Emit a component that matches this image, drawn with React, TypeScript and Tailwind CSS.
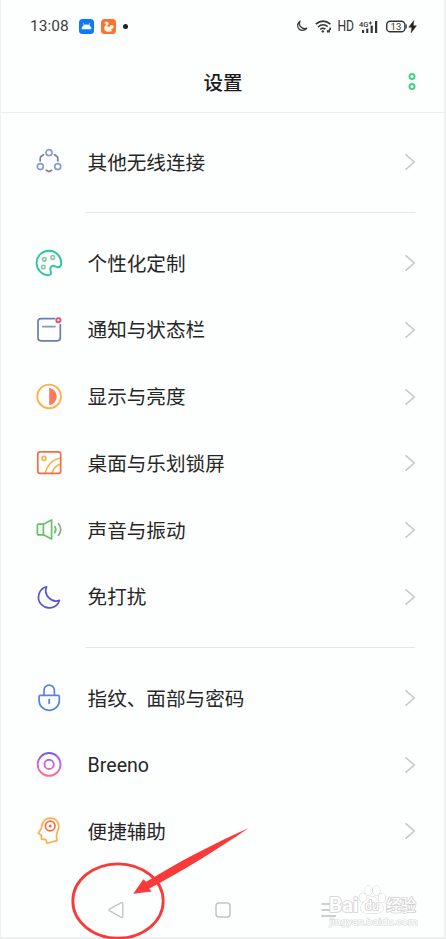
import React from 'react';

type Item = { label: string; icon: React.ReactNode };

function Icon({ color, children }: { color: string; children: React.ReactNode }) {
  return (
    <svg
      width="28"
      height="28"
      viewBox="0 0 28 28"
      fill="none"
      stroke={color}
      strokeWidth="1.7"
      strokeLinecap="round"
      strokeLinejoin="round"
      className="shrink-0"
    >
      {children}
    </svg>
  );
}

const groups: Item[][] = [
  [
    {
      label: '其他无线连接',
      icon: (
        <Icon color="#8c9cc8">
          <circle cx="14" cy="4.7" r="3" />
          <circle cx="5.3" cy="18.6" r="3" />
          <circle cx="22.7" cy="18.6" r="3" />
          <g stroke="#7b8188">
            <path d="M5.2 12.9V10.4Q5.2 8.8 6.6 8L8.5 6.8" />
            <path d="M22.8 12.9V10.4Q22.8 8.8 21.4 8L19.5 6.8" />
            <path d="M11.4 22.2L13.2 23.3Q14 23.8 14.8 23.3L16.6 22.2" />
          </g>
        </Icon>
      ),
    },
  ],
  [
    {
      label: '个性化定制',
      icon: (
        <Icon color="#2cc5a4">
          <path d="M26.2 14.6A12.3 12.3 0 1 0 13.2 26.3C17.6 26.4 15.6 22.6 15.3 20.4C15 17.6 17.6 15.9 20 17.3C23 19 26.2 18.4 26.2 14.6Z" strokeWidth="1.9" />
          <g stroke="#7fcb8c" strokeWidth="1.5">
            <circle cx="9.3" cy="10.3" r="1.8" />
            <circle cx="17.7" cy="8.4" r="1.8" />
            <circle cx="8.4" cy="18" r="1.8" />
          </g>
        </Icon>
      ),
    },
    {
      label: '通知与状态栏',
      icon: (
        <Icon color="#6b7db3">
          <path d="M19.6 2.6H6Q3 2.6 3 5.6V21.8Q3 24.8 6 24.8H22.3Q25.3 24.8 25.3 21.8V8.6" />
          <path d="M7.8 10.6H20" stroke="#8794c4" />
          <circle cx="23.4" cy="4.2" r="2.1" stroke="#f04a62" strokeWidth="1.9" />
        </Icon>
      ),
    },
    {
      label: '显示与亮度',
      icon: (
        <Icon color="#fbb04b">
          <circle cx="14.1" cy="13.4" r="11.8" strokeWidth="1.9" />
          <path d="M14.2 4.8A8.8 8.8 0 0 1 14.2 22.2Z" fill="#ff7a58" stroke="none" />
        </Icon>
      ),
    },
    {
      label: '桌面与乐划锁屏',
      icon: (
        <Icon color="#f2703f">
          <g stroke="#fbb04b" strokeWidth="1.6">
            <circle cx="9" cy="9.4" r="2" />
            <path d="M10.2 23.8C12 16.5 17.5 10.4 25 9.2" />
            <path d="M17.2 23.8C18.2 19.8 21 16.6 25 15.2" />
          </g>
          <rect x="2.8" y="2.8" width="22.9" height="21.6" rx="2.4" />
        </Icon>
      ),
    },
    {
      label: '声音与振动',
      icon: (
        <Icon color="#6abf69">
          <path d="M8.4 8.2H3.2Q2.4 8.2 2.4 9V18Q2.4 18.8 3.2 18.8H8.4Z" />
          <path d="M8.4 8.2L16.6 4V23L8.4 18.8" />
          <path d="M19.8 10.4Q21.8 13.5 19.8 16.7" />
          <path d="M23.4 7.6Q28 13.5 23.4 19.4" stroke="#8fa796" />
        </Icon>
      ),
    },
    {
      label: '免打扰',
      icon: (
        <Icon color="#5a55cf">
          <path d="M11.6 3.8A10.7 10.7 0 1 0 24.4 17.4A10.3 10.3 0 0 1 11.6 3.8Z" />
        </Icon>
      ),
    },
  ],
  [
    {
      label: '指纹、面部与密码',
      icon: (
        <Icon color="#5c83e0">
          <path d="M9 11V6.4A5.2 5.2 0 0 1 19.4 6.4V11" />
          <path d="M5.4 11.3H23Q24.3 11.3 24.3 12.6V16.4A10.1 9.9 0 0 1 4.1 16.4V12.6Q4.1 11.3 5.4 11.3Z" />
          <path d="M14.2 15.6V19.2" strokeWidth="1.8" />
        </Icon>
      ),
    },
    {
      label: 'Breeno',
      icon: (
        <Icon color="url(#breeno)">
          <defs>
            <linearGradient id="breeno" gradientUnits="userSpaceOnUse" x1="14" y1="2" x2="14" y2="26">
              <stop offset="0" stopColor="#7d55ea" />
              <stop offset="0.4" stopColor="#c868e0" />
              <stop offset="0.75" stopColor="#f5689c" />
              <stop offset="1" stopColor="#f7759a" />
            </linearGradient>
          </defs>
          <circle cx="14.1" cy="13.4" r="11.4" strokeWidth="1.9" />
          <circle cx="14.1" cy="13.4" r="4.6" strokeWidth="1.9" />
        </Icon>
      ),
    },
    {
      label: '便捷辅助',
      icon: (
        <Icon color="#fbb04b">
          <path d="M15.6 1.2C20 1.2 23.8 4.4 23.8 9C23.8 12.6 21.3 16 21.4 19.4L22 23.6L12 26.2L10.8 22.4H6.6L6.3 18.3L3.4 16.1C4.6 13.8 6.8 12.2 6.8 9.2C7 4.6 10.8 1.2 15.6 1.2Z" />
          <circle cx="15.2" cy="9" r="4.8" stroke="#f2703f" />
          <circle cx="15.2" cy="9" r="1.5" fill="#f2703f" stroke="none" />
        </Icon>
      ),
    },
  ],
];

function StatusBar() {
  return (
    <div className="flex h-[52px] items-center pr-[27px] pl-[29px]">
      <span className="w-[49px] pt-[2px] text-[15.5px] text-[#3c3c3c]">13:08</span>
      {/* notification icons */}
      <svg width="15" height="15" viewBox="0 0 15 15">
        <rect width="15" height="15" rx="3.5" fill="#0b7bfb" />
        <path d="M2.6 10.2A4.9 4.8 0 0 1 12.4 10.2Z" fill="#fff" />
        <path d="M4.2 4.2L5.4 6.4M10.8 4.2L9.6 6.4" stroke="#fff" strokeWidth="0.8" />
      </svg>
      <svg width="15" height="15" viewBox="0 0 15 15" className="ml-[7px]">
        <rect width="15" height="15" rx="3.5" fill="#fa7430" />
        <path
          d="M3 4.6C3.4 2.4 7 2 7.6 4.2C8.1 6 6.2 6.6 5.2 7.4C7 7.2 8.2 7.8 8.8 8.8C8.2 6.8 9.6 5.6 11.2 6C13.2 6.6 13.2 9.4 11 9.8C9.8 10.2 10 11.4 11.2 12C8.6 13 5 13 3.8 11.2C2.8 9.6 3.2 7.8 4.4 6.4C4.9 5.8 5.2 5.2 4.8 4.6C4.3 4.2 3.6 4.3 3 4.6Z"
          fill="#fff4e8"
        />
      </svg>
      <span className="ml-[7px] size-[5px] rounded-full bg-[#222]" />

      <div className="ml-auto flex items-center">
        <svg width="12" height="12" viewBox="0 0 12 12" fill="none" stroke="#3a3a3a" strokeWidth="1.3" strokeLinejoin="round">
          <path d="M4 1.2A5 5 0 1 0 10.8 8.2A5.2 5.2 0 0 1 4 1.2Z" />
        </svg>
        <svg width="17" height="13" viewBox="0 0 17 13" fill="none" stroke="#333" strokeWidth="1.6" className="ml-[7px]">
          <path d="M0.8 4.2Q8 -2 15.4 4.2M3 7Q8 2.8 12.6 6.6M5.2 9.4Q8 7.2 10.4 9.2" />
          <circle cx="7.8" cy="11.4" r="1.2" fill="#333" stroke="none" />
          <path d="M12.6 10.2V12.6M15.2 7.4V10M14.2 9.6V12.4" strokeWidth="1.5" />
        </svg>
        <svg width="18" height="20" viewBox="0 0 18 20" className="ml-[5px]" fill="#333">
          <text x="0.4" y="15.3" fontSize="15" textLength="16.6" lengthAdjust="spacingAndGlyphs">HD</text>
        </svg>
        <svg width="19" height="13" viewBox="0 0 19 13" className="ml-[4px] overflow-visible" fill="#333">
          <text x="0" y="6.8" fontSize="8" fontWeight="500" textLength="9.4" lengthAdjust="spacingAndGlyphs">4G</text>
          <path d="M9.8 3H13M11.4 1.4V4.6" stroke="#333" strokeWidth="0.9" />
          <rect x="3" y="10" width="2.1" height="3" />
          <rect x="7.2" y="8.6" width="2.1" height="4.4" />
          <rect x="11.6" y="5.6" width="2.2" height="7.4" />
          <rect x="16" y="1" width="2.2" height="12" />
        </svg>
        <svg width="31" height="13" viewBox="0 0 31 13" className="ml-[8px]" fill="none">
          <rect x="0.7" y="1.2" width="18.2" height="10.6" rx="3.6" stroke="#333" strokeWidth="1.4" />
          <path d="M20.2 4.6V8.4" stroke="#333" strokeWidth="1.2" />
          <text x="4.6" y="10" fontSize="9.5" fill="#333" textLength="10.8">13</text>
          <path d="M27.8 0.6L22.8 7.2H25.9L25.2 12.8L30.4 5.8H27.2Z" fill="#222" stroke="#222" strokeWidth="0.5" />
        </svg>
      </div>
    </div>
  );
}

function Header() {
  return (
    <div className="flex h-[61px] items-center border-b border-[#ebeeee] pr-[28.5px] pl-[202.5px]">
      <h1 className="pt-[3px] text-[19.5px] leading-none font-medium text-[#1c1c1c]">设置</h1>
      <svg width="8" height="20" viewBox="0 0 8 20" fill="none" stroke="#43d28a" strokeWidth="2" className="ml-auto">
        <circle cx="4" cy="4.6" r="2.5" />
        <circle cx="4" cy="14.4" r="2.5" />
      </svg>
    </div>
  );
}

function Row({ label, icon }: Item) {
  return (
    <div className="flex h-[66.75px] items-center pr-[28px] pl-[34px]">
      {icon}
      <span className="ml-[24.6px] pt-[3px] text-[19.6px] leading-none text-[#262626]">{label}</span>
      <svg width="12" height="18" viewBox="0 0 12 18" fill="none" stroke="#c9c9c9" strokeWidth="1.6" className="ml-auto">
        <path d="M1.6 1.4L10.2 9L1.6 16.6" />
      </svg>
    </div>
  );
}

function NavBar() {
  return (
    <div className="mt-auto flex h-[55px] items-center pl-[107px]">
      <svg width="16" height="18" viewBox="0 0 16 18" fill="none" stroke="#c4c4c4" strokeWidth="1.4" strokeLinejoin="round">
        <path d="M1.4 8.2Q0.6 8.9 1.4 9.6L12.8 16.2Q14.8 17 14.8 15.2V3Q14.8 1 12.8 1.8Z" />
      </svg>
      <svg width="16" height="16" viewBox="0 0 16 16" fill="none" stroke="#c4c4c4" strokeWidth="1.5" className="ml-[91px]">
        <rect x="1" y="1" width="14" height="14" rx="3" />
      </svg>
      <svg width="16" height="16" viewBox="0 0 16 16" fill="none" stroke="#bdbdbd" strokeWidth="1.5" className="ml-[90px]">
        <path d="M0.5 2H15M0.5 8H15M0.5 14H15" />
      </svg>
    </div>
  );
}

function Watermark() {
  return (
    <svg
      width="96"
      height="46"
      viewBox="0 0 96 46"
      fill="#fff"
      stroke="#d2d2d2"
      strokeWidth="1.6"
      strokeLinejoin="round"
      className="absolute right-[24px] bottom-[8px] [paint-order:stroke]"
    >
      <text x="5" y="28.6" fontSize="19.5" fontWeight="700" textLength="29.5" lengthAdjust="spacingAndGlyphs">Bai</text>
      <text x="62" y="27.6" fontSize="15.5" fontWeight="500" textLength="30" lengthAdjust="spacingAndGlyphs">经验</text>
      <g strokeWidth="1">
        <ellipse cx="38.7" cy="14.6" rx="3.4" ry="4.4" />
        <ellipse cx="44.6" cy="7.6" rx="3.6" ry="4.8" />
        <ellipse cx="52.4" cy="7.6" rx="3.6" ry="4.8" />
        <ellipse cx="58" cy="15" rx="3.4" ry="4.4" />
        <path d="M48 13.5C51.5 13.5 53 16 55 18.5C57 20.5 59.4 22.5 59 26C58.5 30 54.5 30.3 48 30.3C41.5 30.3 37 30 36.6 26C36.2 22.5 39 20.5 41 18.5C43 16 44.5 13.5 48 13.5Z" />
      </g>
      <text x="41" y="27.4" fontSize="12" fontWeight="500" textLength="14" lengthAdjust="spacingAndGlyphs">du</text>
      <text x="5.5" y="42" fontSize="9.5" strokeWidth="1.2" stroke="#dadada" textLength="88" lengthAdjust="spacingAndGlyphs">
        jingyan.baidu.com
      </text>
    </svg>
  );
}

// Red circle and arrow pointing at the back button
function Highlight() {
  return (
    <svg
      width="184"
      height="119"
      viewBox="68 820 184 119"
      className="pointer-events-none absolute -bottom-[2px] left-[67px]"
    >
      <ellipse cx="118" cy="901" rx="45.2" ry="37.2" fill="none" stroke="#f93a3a" strokeWidth="2.8" />
      <path
        d="M133.2 893.8L143.4 879.2L146.2 881.8C180 861 215 843 248.8 828C216 850 183 871 149.2 888.6L151.8 891.6Z"
        fill="#f93a3a"
      />
    </svg>
  );
}

export default function App() {
  return (
    <div className="relative flex h-[939px] w-[446px] flex-col border-r-2 border-b-2 border-l border-[#eeefef] bg-[#fdfefe] font-[Roboto,'Noto_Sans_CJK_SC',sans-serif]">
      <StatusBar />
      <Header />
      <div className="pt-[15.6px]">
        {groups.map((items, i) => (
          <React.Fragment key={i}>
            {i > 0 && <div className="mt-[16.5px] mr-[29px] mb-[16.8px] ml-[84px] h-px bg-[#e6e9e9]" />}
            {items.map(item => (
              <Row key={item.label} {...item} />
            ))}
          </React.Fragment>
        ))}
      </div>
      <NavBar />
      <Watermark />
      <Highlight />
    </div>
  );
}
